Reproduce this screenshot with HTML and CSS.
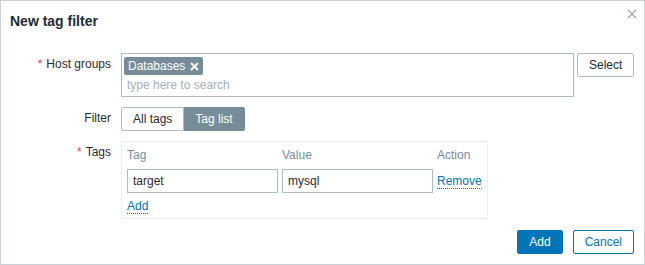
FILE: index.html
```html
<!DOCTYPE html>
<html lang="en">

<head>
    <meta charset="UTF-8">
    <meta name="viewport" content="width=device-width, initial-scale=1.0">
    <title>New tag filter</title>
    <link rel="stylesheet" href="styles.css">
</head>

<body>
    <div class="dialog">
        <div class="dialog-head">
            <h4>New tag filter</h4>
            <button class="close" title="Close">
                <svg width="10" height="10" viewBox="0 0 10 10">
                    <path d="M1 1L9 9M9 1L1 9" stroke="#a5b1b8" stroke-width="1.5" fill="none" />
                </svg>
            </button>
        </div>

        <form class="form">
            <div class="label"><span class="req">*</span>Host groups</div>
            <div class="field field-row">
                <div class="multiselect">
                    <div class="chips">
                        <span class="chip">Databases
                            <svg width="9" height="9" viewBox="0 0 9 9">
                                <path d="M1 1L8 8M8 1L1 8" stroke="#fff" stroke-width="1.8" fill="none" />
                            </svg>
                        </span>
                    </div>
                    <input class="ms-input" type="text" placeholder="type here to search">
                </div>
                <button type="button" class="button grey">Select</button>
            </div>

            <div class="label">Filter</div>
            <div class="field">
                <div class="radio">
                    <span class="radio-item">All tags</span>
                    <span class="radio-item selected">Tag list</span>
                </div>
            </div>

            <div class="label"><span class="req">*</span>Tags</div>
            <div class="field">
                <div class="tags-table">
                    <div class="th">Tag</div>
                    <div class="th">Value</div>
                    <div class="th">Action</div>
                    <input class="text" type="text" value="target">
                    <input class="text" type="text" value="mysql">
                    <div class="cell"><a class="link" href="#">Remove</a></div>
                    <div class="add-row"><a class="link" href="#">Add</a></div>
                </div>
            </div>
        </form>

        <div class="dialog-foot">
            <button type="button" class="button main">Add</button>
            <button type="button" class="button alt">Cancel</button>
        </div>
    </div>
</body>

</html>
```

FILE: styles.css
```css
body {
    margin: 0;
    font-family: "Liberation Sans", Arial, sans-serif;
    font-size: 12px;
    color: #1f2c33;
    background-color: #fff;
}

.dialog {
    box-sizing: border-box;
    width: 645px;
    height: 265px;
    border: 1px solid #c9d1d6;
    background-color: #fff;
}

.dialog-head {
    display: flex;
    justify-content: space-between;
    align-items: flex-start;
    padding: 8px 7px 0 9px;
}

.dialog-head h4 {
    margin: 4px 0 0;
    font-size: 14px;
    line-height: 16px;
    font-weight: bold;
    color: #1f2c33;
}

.close {
    display: block;
    width: 10px;
    height: 10px;
    padding: 0;
    border: none;
    background: none;
    cursor: pointer;
}

.close svg {
    display: block;
}

.form {
    display: grid;
    grid-template-columns: 101px 1fr;
    column-gap: 10px;
    row-gap: 10px;
    margin: 24px 0 0;
    padding: 0 10px 0 9px;
}

.label {
    padding-top: 4px;
    line-height: 14px;
    text-align: right;
    white-space: nowrap;
}

.req {
    color: #e54335;
    margin-right: 4px;
}

.field-row {
    display: flex;
    align-items: flex-start;
    gap: 3px;
}

.multiselect {
    box-sizing: border-box;
    width: 453px;
    height: 44px;
    border: 1px solid #acbbc4;
    padding: 3px 2px 0;
}

.chips {
    display: flex;
}

.chip {
    display: inline-flex;
    align-items: center;
    height: 18px;
    line-height: 18px;
    padding: 0 4px 0 4px;
    border-radius: 2px;
    background-color: #768d99;
    color: #fff;
}

.chip svg {
    margin-left: 5px;
}

.ms-input {
    display: block;
    width: 100%;
    box-sizing: border-box;
    margin-top: 3px;
    padding: 0 0 0 3px;
    border: none;
    outline: none;
    font-family: inherit;
    font-size: 12px;
    line-height: 14px;
    height: 14px;
    color: #1f2c33;
    background: transparent;
}

.ms-input::placeholder {
    color: #a5b1b8;
}

.button {
    box-sizing: border-box;
    height: 24px;
    padding: 0 11px;
    border: 1px solid #acbbc4;
    border-radius: 2px;
    font-family: inherit;
    font-size: 12px;
    line-height: 22px;
    cursor: pointer;
}

.button.grey {
    background-color: #fff;
    color: #1f2c33;
}

.button.main {
    background-color: #0275b8;
    border-color: #0275b8;
    color: #fff;
}

.button.alt {
    background-color: #fff;
    border-color: #0275b8;
    color: #0275b8;
}

.radio {
    display: inline-flex;
    height: 24px;
}

.radio-item {
    box-sizing: border-box;
    height: 24px;
    padding: 0 11px;
    border: 1px solid #acbbc4;
    line-height: 22px;
    background-color: #fff;
    color: #1f2c33;
}

.radio-item:first-child {
    border-radius: 2px 0 0 2px;
}

.radio-item.selected {
    border-color: #768d99;
    border-left: none;
    border-radius: 0 2px 2px 0;
    background-color: #768d99;
    color: #fff;
}

.tags-table {
    box-sizing: border-box;
    width: 367px;
    display: grid;
    grid-template-columns: 151px 151px auto;
    column-gap: 4px;
    border: 1px solid #ebeef0;
    padding: 6px 5px 5px 5px;
}

.th {
    line-height: 14px;
    padding-bottom: 7px;
    color: #768d99;
}

.text {
    box-sizing: border-box;
    width: 151px;
    height: 24px;
    margin: 0;
    padding: 0 5px;
    border: 1px solid #acbbc4;
    font-family: inherit;
    font-size: 12px;
    color: #1f2c33;
    outline: none;
}

.cell {
    display: flex;
    align-items: center;
    height: 24px;
}

.add-row {
    grid-column: 1 / -1;
    padding-top: 6px;
    line-height: 14px;
}

.link {
    color: #0275b8;
    text-decoration: none;
    border-bottom: 1px dotted #0275b8;
}

.dialog-foot {
    display: flex;
    justify-content: flex-end;
    gap: 10px;
    padding: 11px 10px 0;
}
```
